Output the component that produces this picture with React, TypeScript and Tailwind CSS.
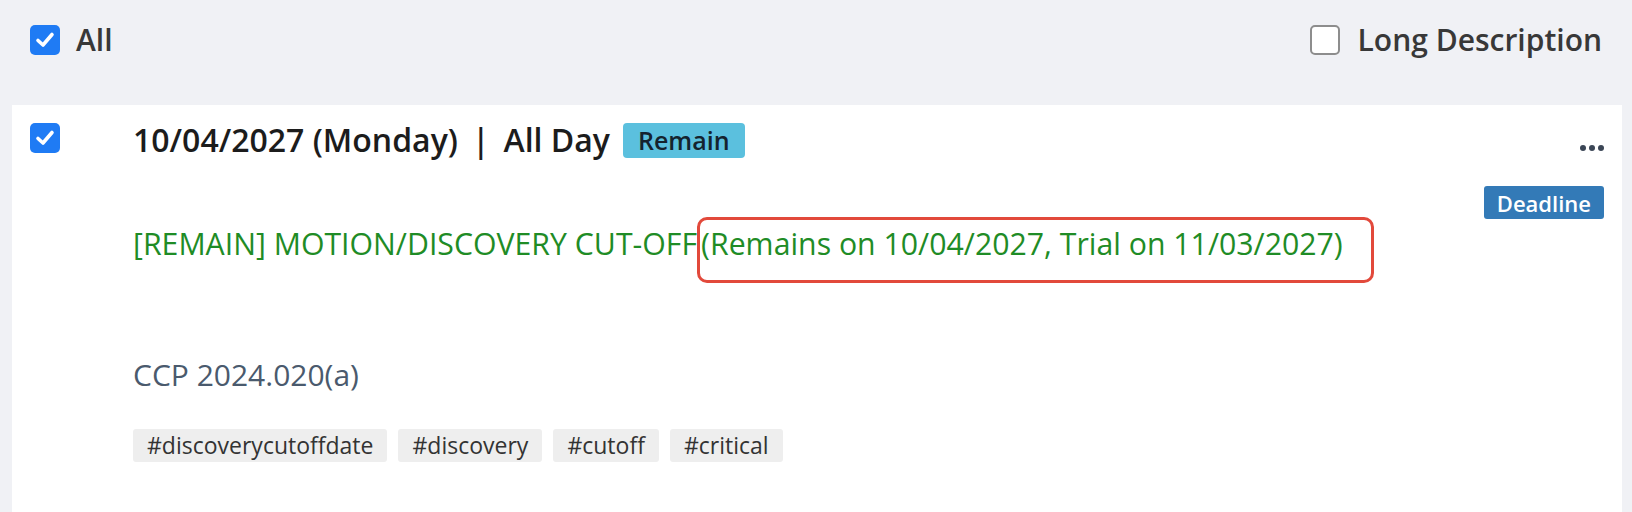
import React from "react";

function CheckBox({ checked }: { checked: boolean }) {
  if (checked) {
    return (
      <div className="w-[30px] h-[30px] rounded-[5px] bg-[#1f7bf4] flex items-center justify-center shrink-0">
        <svg width="24" height="24" viewBox="0 0 24 24" fill="none">
          <path d="M5 12.5 L10 17 L19 6.5" stroke="white" strokeWidth="3.6" strokeLinecap="round" strokeLinejoin="round" />
        </svg>
      </div>
    );
  }
  return <div className="w-[30px] h-[30px] rounded-[5px] bg-white border-2 border-[#8d8d8d] shrink-0" />;
}

const tags = ["#discoverycutoffdate", "#discovery", "#cutoff", "#critical"];

export default function App() {
  return (
    <div className="w-[1632px] h-[512px] bg-[#f0f1f5] overflow-hidden flex flex-col font-['Open_Sans',sans-serif]">
      <div className="h-[105px] shrink-0 px-[30px] pb-[25px] flex items-center justify-between">
        <div className="flex items-center gap-[16px]">
          <CheckBox checked />
          <span className="text-[30px] font-semibold text-[#383838] leading-[40px]">All</span>
        </div>
        <div className="flex items-center gap-[18px]">
          <CheckBox checked={false} />
          <span className="text-[30px] font-semibold text-[#383838] leading-[40px]">Long Description</span>
        </div>
      </div>
      <div className="flex-1 ml-[12px] mr-[10px] bg-white flex">
        <div className="pl-[18px] pt-[18px] w-[121px] shrink-0">
          <CheckBox checked />
        </div>
        <div className="flex-1 flex flex-col pt-[15px]">
          <div className="h-[40px] flex items-center">
            <span className="text-[32px] font-semibold text-[#1c1c1c] leading-[40px] whitespace-nowrap">
              10/04/2027 (Monday)
              <span className="mx-[14px]">|</span>
              All Day
            </span>
            <span className="ml-[13px] h-[35px] px-[15px] rounded-[4px] bg-[#5bc0de] text-[#14232e] text-[25px] font-semibold flex items-center leading-none">
              Remain
            </span>
          </div>
          <div className="mt-[57px] text-[30.25px] leading-[40px] text-[#1f8c26] whitespace-nowrap">
            [REMAIN] MOTION/DISCOVERY CUT-OFF<span className="inline-block border-[3px] border-[#e2493b] rounded-[10px] pl-[1px] pr-[28px] pt-[4px] pb-[16px]">(Remains on 10/04/2027, Trial on 11/03/2027)</span>
          </div>
          <div className="mt-[72px] text-[30px] leading-[40px] text-[#4a5a6d]">CCP 2024.020(a)</div>
          <div className="mt-[34px] flex gap-[11px]">
            {tags.map((t) => (
              <span key={t} className="h-[33px] px-[14px] rounded-[3px] bg-[#eeeeee] text-[#333333] text-[23px] leading-[33px]">
                {t}
              </span>
            ))}
          </div>
        </div>
        <div className="pr-[18px] pt-[40px] flex flex-col items-end shrink-0">
          <div className="flex gap-[3px] h-[6px] items-center">
            <span className="w-[6px] h-[6px] rounded-full bg-[#3b4656]" />
            <span className="w-[6px] h-[6px] rounded-full bg-[#3b4656]" />
            <span className="w-[6px] h-[6px] rounded-full bg-[#3b4656]" />
          </div>
          <span className="mt-[35px] h-[33px] px-[13px] rounded-[3px] bg-[#337ab7] text-white text-[22px] font-semibold flex items-center leading-none">
            Deadline
          </span>
        </div>
      </div>
    </div>
  );
}
